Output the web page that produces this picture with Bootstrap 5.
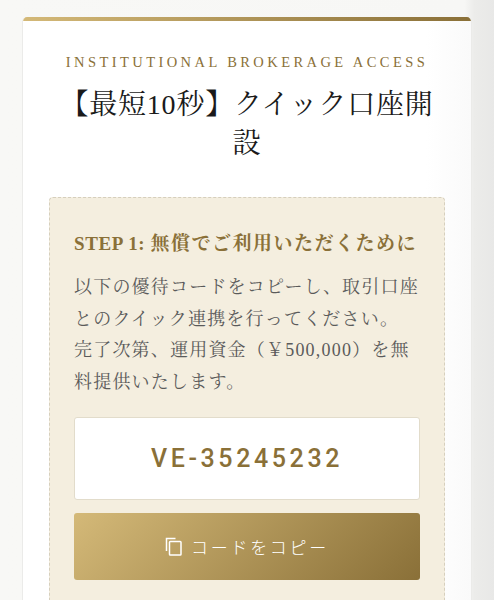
<!DOCTYPE html>
<html lang="ja">
<head>
<meta charset="utf-8">
<meta name="viewport" content="width=device-width, initial-scale=1">
<title>クイック口座開設</title>
<link rel="stylesheet" href="https://cdn.jsdelivr.net/npm/bootstrap@5.3.0/dist/css/bootstrap.min.css">
<style>
html,body{height:600px;overflow:hidden}
body{background:linear-gradient(90deg,#f8f8f6 0%,#f7f7f5 94%,#ececea 96%,#e8e8e7 100%);font-family:"Liberation Serif","Noto Serif CJK JP","Noto Sans CJK JP",serif;padding:17px 22px 0}
.lux-card{background:linear-gradient(90deg,#fff 90%,#fafafa 100%);border:1px solid #ebebe9;border-top:0;border-radius:5px 5px 0 0;overflow:hidden;padding:0 26px 40px}
.lux-bar{height:4px;margin:0 -26px;background:linear-gradient(90deg,#d4b978,#8a7038)}
.lux-eyebrow{color:#8a7038;font-size:14.5px;letter-spacing:3.42px;line-height:20px;margin:31px 0 0;white-space:nowrap;font-weight:500}
.lux-title{color:#1a1a1a;font-family:inherit;font-size:28px;letter-spacing:.8px;font-weight:400;line-height:39px;margin:13px 0 34px}
.lux-box{background:#f4eedf;border:1px dashed #d6cfbd;border-radius:4px;padding:33px 24px 30px}
.lux-step{color:#8a7038;font-size:19px;font-weight:700;line-height:26px;letter-spacing:1.5px;margin-bottom:15px;white-space:nowrap}
.lux-step-en{letter-spacing:.6px}
.lux-text{color:#5a5a5a;font-size:18px;line-height:31.5px;letter-spacing:1.2px;margin-bottom:19px}
.lux-code{background:#fff;border:1px solid #e2dccb;border-radius:3px;color:#8a7038;font-family:Roboto,sans-serif;font-size:25px;font-weight:500;letter-spacing:3.6px;height:83px}
.lux-copy{background:linear-gradient(135deg,#d4b978,#8a7038);border:0;border-radius:3px;color:#fff;font-size:17px;font-family:"Noto Sans CJK JP",sans-serif;font-weight:300;letter-spacing:2.7px;height:67px;margin-top:13px}
.lux-copy:hover{color:#fff}
</style>
</head>
<body>
<main class="lux-card">
  <div class="lux-bar"></div>
  <p class="lux-eyebrow text-center">INSTITUTIONAL BROKERAGE ACCESS</p>
  <h1 class="lux-title text-center">【最短10秒】クイック口座開設</h1>
  <section class="lux-box">
    <h2 class="lux-step"><span class="lux-step-en">STEP 1: </span>無償でご利用いただくために</h2>
    <p class="lux-text">以下の優待コードをコピーし、取引口座とのクイック連携を行ってください。<br>完了次第、運用資金（￥500,000）を無料提供いたします。</p>
    <div class="lux-code d-flex align-items-center justify-content-center">VE-35245232</div>
    <button type="button" class="lux-copy btn w-100 d-flex align-items-center justify-content-center gap-2">
      <svg width="18" height="19" viewBox="0 0 18 19" fill="none" stroke="#fff" stroke-width="1.5" aria-hidden="true"><path d="M1.5 14V1.5h9"/><rect x="4.5" y="4.5" width="11.5" height="13.5" rx=".8"/></svg>
      <span>コードをコピー</span>
    </button>
  </section>
</main>
<script src="https://cdn.jsdelivr.net/npm/bootstrap@5.3.0/dist/js/bootstrap.bundle.min.js"></script>
</body>
</html>
